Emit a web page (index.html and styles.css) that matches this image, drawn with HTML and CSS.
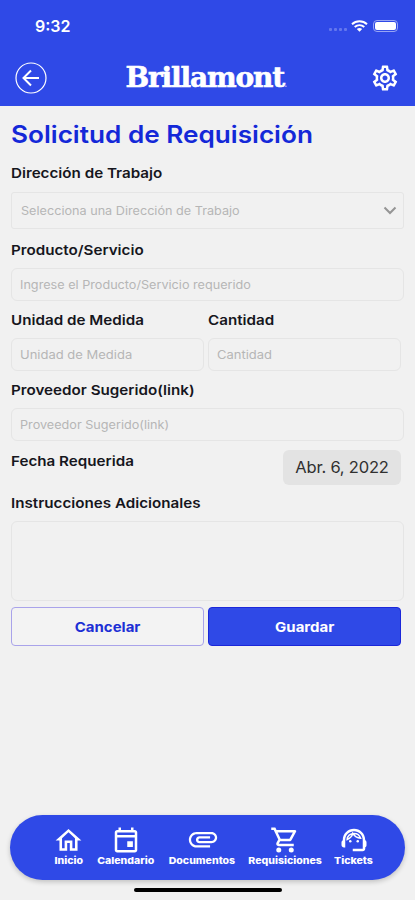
FILE: index.html
```html
<!DOCTYPE html>
<html lang="es">
<head>
<meta charset="utf-8">
<meta name="viewport" content="width=device-width, initial-scale=1">
<title>Solicitud de Requisición</title>
<link rel="stylesheet" href="styles.css">
</head>
<body>
<header class="header">
  <div class="status">
    <span class="time">9:32</span>
    <div class="status-icons">
      <span class="dots"><i></i><i></i><i></i><i></i></span>
      <svg class="wifi" viewBox="0 0 17 12"><path d="M1 4.2C5.2.4 11.800.4 16 4.200M3.700 7C6.500 4.500 10.500 4.500 13.300 7" fill="none" stroke="#fff" stroke-width="2"/><path d="M8.500 11.800 5.800 9.100Q8.500 7 11.200 9.100Z" fill="#fff"/></svg>
      <span class="battery"><i></i></span>
    </div>
  </div>
  <div class="bar">
    <svg class="back" viewBox="0 0 32 32" fill="none" stroke="#fff"><circle cx="16" cy="16" r="15" stroke-width="1.200"/><path d="M24 16H9M16 8.500 8.500 16l7.500 7.500" stroke-width="2"/></svg>
    <div class="logo"><span class="wordmark">Brillamont</span><span class="mark">.</span></div>
    <svg class="gear" viewBox="0 0 24 24" fill="#fff"><path d="M19.43 12.98c.04-.32.07-.64.07-.98 0-.34-.03-.66-.07-.98l2.110-1.650c.19-.15.24-.42.12-.64l-2-3.460c-.09-.16-.26-.25-.44-.25-.06 0-.12.01-.17.03l-2.490 1c-.52-.4-1.080-.73-1.690-.98l-.38-2.650C14.460 2.180 14.250 2 14 2h-4c-.25 0-.46.18-.49.42l-.38 2.650c-.61.25-1.170.59-1.690.98l-2.490-1c-.06-.02-.12-.03-.18-.03-.17 0-.34.09-.43.25l-2 3.460c-.13.22-.07.49.12.64l2.110 1.650c-.04.32-.07.65-.07.98 0 .33.03.66.07.98l-2.110 1.650c-.19.15-.24.42-.12.64l2 3.460c.09.16.26.25.44.25.06 0 .12-.01.17-.03l2.490-1c.52.4 1.080.73 1.690.98l.38 2.650c.03.24.24.42.49.42h4c.25 0 .46-.18.49-.42l.38-2.650c.61-.25 1.170-.59 1.690-.98l2.490 1c.06.02.12.03.18.03.17 0 .34-.09.43-.25l2-3.460c.12-.22.07-.49-.12-.64l-2.110-1.650zm-1.980-1.710c.04.31.05.52.05.73 0 .21-.02.43-.05.73l-.14 1.130.89.7 1.080.84-.7 1.210-1.270-.51-1.040-.42-.9.68c-.43.32-.84.56-1.250.73l-1.060.43-.16 1.130-.2 1.350h-1.400l-.19-1.350-.16-1.130-1.060-.43c-.43-.18-.83-.41-1.230-.71l-.91-.7-1.060.43-1.270.51-.7-1.210 1.080-.84.89-.7-.14-1.130c-.03-.31-.05-.54-.05-.74s.02-.43.05-.73l.14-1.130-.89-.7-1.080-.84.7-1.210 1.270.51 1.040.42.9-.68c.43-.32.84-.56 1.250-.73l1.060-.43.16-1.130.2-1.350h1.390l.19 1.350.16 1.130 1.060.43c.43.18.83.41 1.230.71l.91.7 1.060-.43 1.270-.51.7 1.210-1.070.85-.89.7.14 1.130zM12 8c-2.210 0-4 1.790-4 4s1.790 4 4 4 4-1.790 4-4-1.790-4-4-4zm0 6c-1.100 0-2-.9-2-2s.9-2 2-2 2 .9 2 2-.9 2-2 2z"/></svg>
  </div>
</header>
<main class="form">
  <h1 class="title">Solicitud de Requisición</h1>
  <div class="label l-dir">Dirección de Trabajo</div>
  <div class="field select"><span class="ph p-dir">Selecciona una Dirección de Trabajo</span>
    <svg class="chev" viewBox="0 0 14 9"><path d="M1.500 1.500 7 7l5.500-5.500" fill="none" stroke="#959595" stroke-width="2"/></svg></div>
  <div class="label l-prod">Producto/Servicio</div>
  <div class="field"><span class="ph p-prod">Ingrese el Producto/Servicio requerido</span></div>
  <div class="pair">
    <div><div class="label l-uni">Unidad de Medida</div><div class="field"><span class="ph p-uni">Unidad de Medida</span></div></div>
    <div><div class="label l-can">Cantidad</div><div class="field"><span class="ph p-can">Cantidad</span></div></div>
  </div>
  <div class="label l-prov">Proveedor Sugerido(link)</div>
  <div class="field"><span class="ph p-prov">Proveedor Sugerido(link)</span></div>
  <div class="date-row"><div class="label l-fec">Fecha Requerida</div><div class="date">Abr. 6, 2022</div></div>
  <div class="label l-ins">Instrucciones Adicionales</div>
  <div class="field area"></div>
  <div class="pair actions"><button class="btn ghost"><span>Cancelar</span></button><button class="btn solid"><span>Guardar</span></button></div>
</main>
<footer class="footer">
  <nav class="nav">
    <a class="item n-ini"><svg viewBox="0 0 24 24"><path d="M12 5.690l5 4.500V18h-2v-6H9v6H7v-7.810l5-4.500M12 3L2 12h3v8h6v-6h2v6h6v-8h3L12 3z"/></svg><span>Inicio</span></a>
    <a class="item n-cal"><svg viewBox="0 0 24 24"><path d="M19 4h-1V2h-2v2H8V2H6v2H5c-1.110 0-1.990.9-1.990 2L3 20c0 1.100.89 2 2 2h14c1.100 0 2-.9 2-2V6c0-1.100-.9-2-2-2zm0 16H5V10h14v10zm0-12H5V6h14v2zm-6 5h4.500v4.500H13z"/></svg><span>Calendario</span></a>
    <a class="item n-doc"><svg viewBox="0 0 24 24"><path d="M2 12.500C2 9.460 4.460 7 7.500 7H18c2.210 0 4 1.790 4 4s-1.790 4-4 4H9.500C8.120 15 7 13.880 7 12.500S8.120 10 9.500 10H17v1.600H9.410c-.9 0-.9 1.800 0 1.800H18c1.300 0 2.400-1.100 2.400-2.400s-1.100-2.400-2.400-2.400H7.500C5.350 8.600 3.600 10.350 3.600 12.500S5.350 16.400 7.500 16.400H17V18H7.500C4.460 18 2 15.540 2 12.500z"/></svg><span>Documentos</span></a>
    <a class="item n-req"><svg viewBox="0 0 24 24"><path d="M15.550 13c.75 0 1.410-.41 1.750-1.030l3.580-6.490c.37-.66-.11-1.480-.87-1.480H5.210l-.94-2H1v2h2l3.600 7.590-1.350 2.440C4.520 15.370 5.480 17 7 17h12v-2H7l1.100-2h7.450zM6.160 6h12.150l-2.760 5H8.530L6.160 6z"/><circle cx="7" cy="20" r="2"/><circle cx="17" cy="20" r="2"/></svg><span>Requisiciones</span></a>
    <a class="item n-tic"><svg viewBox="0 0 24 24"><path d="M21 12.220C21 6.730 16.740 3 12 3c-4.690 0-9 3.650-9 9.280-.6.34-1 .98-1 1.720v2c0 1.100.9 2 2 2h1v-6.100c0-3.870 3.130-7 7-7s7 3.130 7 7V19h-8v2h8c1.100 0 2-.9 2-2v-1.220c.59-.31 1-.92 1-1.640v-2.300c0-.7-.41-1.310-1-1.620z"/><circle cx="9" cy="13" r="1"/><circle cx="15" cy="13" r="1"/><path d="M6.500 11.600C9 10.500 10.600 8.700 11 6.700c1.500 2.400 3.500 3.700 6.300 3.900C16.500 8.200 14.500 6.700 12 6.700c-3 0-5.400 2-5.500 4.900z" fill="none" stroke="#fff" stroke-width="1.200"/></svg><span>Tickets</span></a>
  </nav>
  <div class="home-bar"></div>
</footer>
</body>
</html>
```
FILE: styles.css
```css
* { box-sizing: border-box; }
body { margin: 0; width: 415px; height: 900px; overflow: hidden; background: #f1f1f1; font-family: Inter, sans-serif; display: flex; flex-direction: column; }
svg { display: block; flex: none; }
.header { height: 106px; background: #2f49e7; color: #fff; flex: none; }
.status { height: 50px; padding: 2px 16px 0 35px; display: flex; align-items: center; justify-content: space-between; }
.time { font-size: 16px; font-weight: 600; line-height: 20px; margin-top: -1px; }
.status-icons { display: flex; align-items: center; margin-top: -1px; }
.dots { display: flex; gap: 2px; margin: 7px 4px 0 0; }
.dots i { width: 3px; height: 3px; border-radius: 1px; background: #6477ee; }
.wifi { width: 17px; height: 12px; margin-right: 5px; }
.battery { width: 25px; height: 12px; border: 1px solid #98a5f4; border-radius: 4px; padding: 1px; margin-right: 1px; }
.battery i { display: block; height: 100%; background: #fff; border-radius: 2px; }
.bar { height: 56px; padding: 0 15px; display: flex; align-items: center; justify-content: space-between; }
.back { width: 32px; height: 32px; }
.gear { width: 30px; height: 30px; }
.logo { display: flex; align-items: baseline; width: 164px; height: 34px; line-height: 34px; margin-right: 2px; }
.wordmark { font-family: "DejaVu Serif", serif; font-weight: 700; font-size: 28px; letter-spacing: -1.150px; -webkit-text-stroke: .6px #fff; }
.mark { font-size: 12px; opacity: .6; }
.form { padding: 0 11px; flex: 1; }
.title { margin: 14px 0 0; height: 30px; line-height: 30px; width: max-content; font-size: 24px; font-weight: 600; color: #1428d8; white-space: nowrap; transform: scaleX(1.09); transform-origin: left; }
.label { width: max-content; height: 20px; line-height: 20px; font-size: 13.500px; font-weight: 600; color: #16161d; white-space: nowrap; transform: scaleX(1.125); transform-origin: left; }
.l-dir { margin-top: 13px; }
.field { height: 33px; border: 1px solid #e5e5e5; border-radius: 6px; padding: 0 8px; display: flex; align-items: center; justify-content: space-between; }
.form > .field { width: 393px; }
.ph { font-size: 11.500px; color: #b6b6b6; white-space: nowrap; transform: scaleX(1.1); transform-origin: left; }
.p-uni, .p-can { transform: scaleX(1.13); }
.select { height: 37px; margin-top: 9px; border-radius: 3px; padding: 0 6px 0 9px; }
.chev { width: 14px; height: 9px; }
.l-prod { margin: 11px 0 8px; }
.pair { display: grid; grid-template-columns: 193px 193px; gap: 4px; }
.pair .label { margin: 9px 0 8px; }
.l-prov { margin: 9px 0 8px; }
.date-row { display: flex; justify-content: space-between; padding-right: 3px; margin-top: 9px; height: 35px; }
.l-fec { margin-top: 1px; }
.date { width: 118px; height: 35px; border-radius: 6px; background: #e3e3e3; color: #303030; font-size: 16.500px; letter-spacing: -.2px; line-height: 34px; text-align: center; white-space: nowrap; }
.l-ins { margin: 8px 0; }
.area { height: 80px; }
.actions { margin-top: 6px; }
.btn { height: 39px; border-radius: 4px; font: 700 13.500px Inter, sans-serif; padding: 0; }
.btn span { display: inline-block; transform: scaleX(1.11); }
.ghost { border: 1px solid #a9a3ea; background: #f3f3f3; color: #1c2fd5; }
.solid { border: 1px solid #1b27d9; background: #2f49e7; color: #fff; }
.footer { height: 85px; padding: 0 10px; flex: none; }
.nav { width: 395px; height: 65px; border-radius: 33px; background: #2f49e7; box-shadow: 0 2px 5px #0003; display: grid; grid-template-columns: 43px 72px 79px 88px 49px; justify-content: start; align-content: start; padding: 11px 0 0 37px; color: #fff; }
.item { display: grid; grid-template-rows: 28px 14px; align-items: center; justify-items: center; }
.item svg { width: 30px; height: 30px; fill: #fff; }
.n-ini svg { width: 31px; height: 31px; }
.n-doc svg { width: 34px; height: 34px; margin: -2px 0 0 2px; }
.item span { font-size: 9.500px; font-weight: 800; line-height: 14px; white-space: nowrap; transform: scaleX(1.11); }
.home-bar { width: 148px; height: 4px; margin: 8px auto 0; border-radius: 2px; background: #000; }
```
